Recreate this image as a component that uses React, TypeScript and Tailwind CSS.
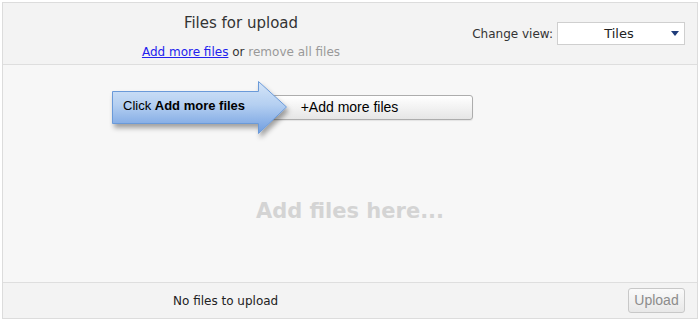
import React from 'react';

const font = { fontFamily: '"DejaVu Sans", Verdana, sans-serif' };

function CalloutArrow() {
  return (
    <div className="absolute left-[106px] top-[15px] w-[185px] h-[62px]">
      <svg width="185" height="62" viewBox="0 0 185 62" className="absolute left-0 top-0">
        <defs>
          <linearGradient id="arrowFill" x1="0" y1="0" x2="0" y2="1">
            <stop offset="0" stopColor="#d6e6f8" />
            <stop offset="0.45" stopColor="#b4cff1" />
            <stop offset="1" stopColor="#6f9de0" />
          </linearGradient>
          <filter id="arrowShadow" x="-10%" y="-10%" width="130%" height="140%">
            <feDropShadow dx="2" dy="4" stdDeviation="2.5" floodColor="#000" floodOpacity="0.35" />
          </filter>
        </defs>
        <path
          d="M3.5 11.5 H149.5 V1.5 L177.5 27 L149.5 53.5 V43.5 H3.5 Z"
          fill="url(#arrowFill)"
          stroke="#6b9ad9"
          strokeWidth="1"
          filter="url(#arrowShadow)"
        />
      </svg>
      <div
        className="absolute left-[14px] top-[18px] text-[13px] leading-[16px] text-black"
        style={{ fontFamily: '"Liberation Sans", Arial, sans-serif' }}
      >
        Click <span className="font-bold">Add more files</span>
      </div>
    </div>
  );
}

export default function App() {
  return (
    <div className="bg-white w-[700px] h-[322px] pt-[2px] pl-[2px]" style={font}>
      <div className="w-[696px] h-[317px] border border-[#dcdcdc] flex flex-col">
        {/* header */}
        <div className="h-[62px] bg-[#f3f3f3] border-b border-[#dedede] flex">
          <div className="w-[466px] pl-[10px] flex flex-col items-center pt-[10px]">
            <div className="text-[15px] leading-[20px] text-[#333]">Files for upload</div>
            <div className="mt-[11px] text-[12px] leading-[16px] text-[#333]">
              <a href="#" className="text-[#2222ee] underline">Add more files</a>
              <span> or </span>
              <span className="text-[#999]">remove all files</span>
            </div>
          </div>
          <div className="flex-1 flex items-start justify-end pr-[12px] pt-[19px] whitespace-nowrap">
            <span className="text-[12px] leading-[24px] text-[#333] mr-[4px]">Change view:</span>
            <div className="relative shrink-0 w-[128px] h-[23px] bg-white border border-[#cfcfcf] flex items-center justify-center">
              <span className="text-[13px] text-[#222] mr-[4px]">Tiles</span>
              <svg width="8" height="5" viewBox="0 0 8 5" className="absolute right-[5px] top-[8px]">
                <path d="M0 0 H8 L4 5 Z" fill="#1f3c7a" />
              </svg>
            </div>
          </div>
        </div>

        {/* body */}
        <div className="relative flex-1 bg-[#f7f7f7] border-b border-[#dedede] flex flex-col">
          <div className="pt-[30px] pl-[259px]">
            <button
              className="w-[211px] h-[25px] pr-[36px] rounded-[3px] border border-[#adadad] bg-gradient-to-b from-white to-[#e6e6e6] text-[14px] text-black shadow-[0_1px_1px_rgba(0,0,0,0.08)]"
              style={{ fontFamily: '"Liberation Sans", Arial, sans-serif' }}
            >
              +Add more files
            </button>
          </div>
          <div className="flex-1 flex items-start justify-center pt-[78px]">
            <span className="text-[21px] font-bold text-[#d4d4d4] leading-[26px]">Add files here...</span>
          </div>
          <CalloutArrow />
        </div>

        {/* footer */}
        <div className="h-[35px] bg-[#f3f3f3] flex items-center">
          <div className="pl-[170px] text-[12px] text-[#222] flex-1">No files to upload</div>
          <button
            className="mr-[12px] w-[57px] h-[25px] rounded-[3px] border border-[#c8c8c8] bg-gradient-to-b from-[#fafafa] to-[#e8e8e8] text-[14px] text-[#8c8c8c]"
            style={{ fontFamily: '"Liberation Sans", Arial, sans-serif' }}
          >
            Upload
          </button>
        </div>
      </div>
    </div>
  );
}
